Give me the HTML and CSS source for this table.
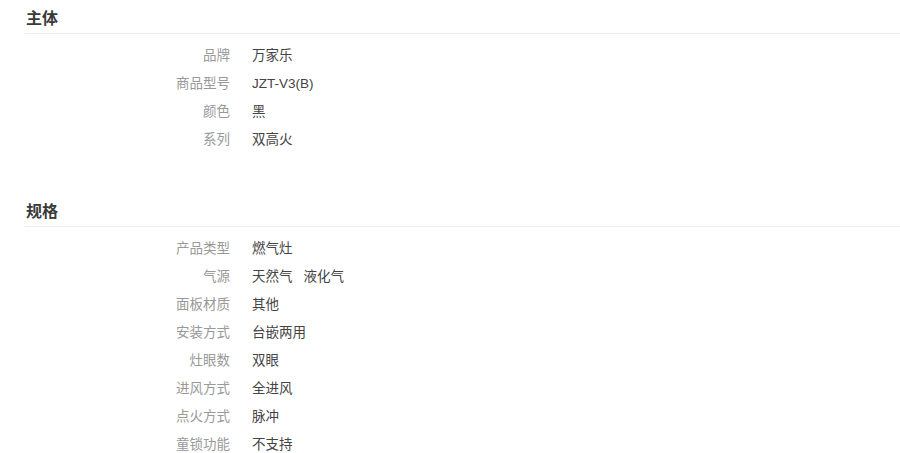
FILE: index.html
```html
<!DOCTYPE html>
<html lang="zh-CN">
<head>
<meta charset="utf-8">
<title>规格参数</title>
<link rel="stylesheet" href="styles.css">
</head>
<body>
<div class="page">
  <section class="group">
    <h3 class="group-title">主体</h3>
    <dl class="params">
      <div class="row"><dt>品牌</dt><dd>万家乐</dd></div>
      <div class="row"><dt>商品型号</dt><dd>JZT-V3(B)</dd></div>
      <div class="row"><dt>颜色</dt><dd>黑</dd></div>
      <div class="row"><dt>系列</dt><dd>双高火</dd></div>
    </dl>
  </section>
  <section class="group group-second">
    <h3 class="group-title">规格</h3>
    <dl class="params">
      <div class="row"><dt>产品类型</dt><dd>燃气灶</dd></div>
      <div class="row"><dt>气源</dt><dd><span class="opt">天然气</span><span class="opt">液化气</span></dd></div>
      <div class="row"><dt>面板材质</dt><dd>其他</dd></div>
      <div class="row"><dt>安装方式</dt><dd>台嵌两用</dd></div>
      <div class="row"><dt>灶眼数</dt><dd>双眼</dd></div>
      <div class="row"><dt>进风方式</dt><dd>全进风</dd></div>
      <div class="row"><dt>点火方式</dt><dd>脉冲</dd></div>
      <div class="row"><dt>童锁功能</dt><dd>不支持</dd></div>
    </dl>
  </section>
</div>
</body>
</html>
```

FILE: styles.css
```css
html, body {
  margin: 0;
  padding: 0;
  background: #fff;
}

body {
  font-family: "Liberation Sans", "Noto Sans CJK SC", sans-serif;
  color: #333;
}

.page {
  padding-left: 25px;
}

.group-title {
  margin: 0;
  padding: 6px 0 1px 1px;
  line-height: 26px;
  font-size: 16px;
  font-weight: bold;
  color: #3a3a3a;
  border-bottom: 1px solid #ececec;
}

.group-second {
  margin-top: 39px;
}

.params {
  margin: 8px 0 0 0;
  padding: 0;
}

.row {
  display: grid;
  grid-template-columns: 205px 1fr;
  column-gap: 22px;
  line-height: 28px;
  font-size: 13.5px;
}

.row dt {
  text-align: right;
  color: #999;
}

.row dd {
  margin: 0;
  color: #444;
}

.opt {
  margin-right: 11px;
}
```
